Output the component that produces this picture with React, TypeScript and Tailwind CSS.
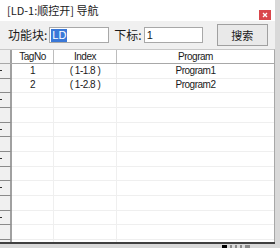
import React from "react";

const cjk = { fontFamily: '"Noto Sans CJK SC", "Liberation Sans", sans-serif' };
const sans = { fontFamily: '"Liberation Sans", Arial, sans-serif' };

const rows = [
  { tag: "1", idx: "( 1-1.8 )", prog: "Program1" },
  { tag: "2", idx: "( 1-2.8 )", prog: "Program2" },
];

export default function App() {
  const total = 13;
  const body = Array.from({ length: total }, (_, i) => rows[i] ?? null);
  return (
    <div className="relative w-[280px] h-[248px] overflow-hidden bg-[#d9d9d9]">
      <div className="flex flex-col w-[275px] h-[244px] bg-[#f0f0f0] border-b-2 border-[#404040]">
        {/* title bar */}
        <div className="relative h-[21px] shrink-0 bg-white flex items-center pl-[7px] text-[11px] text-[#1a1a1a]" style={cjk}>
          <span className="leading-none whitespace-nowrap">[LD-1:顺控开] 导航</span>
          <div className="absolute left-[259px] top-[10px] w-[12px] h-[10px] bg-[#d9464b] flex items-center justify-center">
            <svg width="6" height="6" viewBox="0 0 6 6">
              <path d="M1 1L5 5M5 1L1 5" stroke="#fff" strokeWidth="1.3" />
            </svg>
          </div>
        </div>
        {/* toolbar */}
        <div className="h-[28px] shrink-0 flex items-center text-[12px] text-[#1a1a1a] whitespace-nowrap" style={cjk}>
          <span className="ml-[8px] leading-none shrink-0">功能块:</span>
          <div className="ml-[2px] shrink-0 w-[60px] h-[16px] bg-white border border-[#a8a8a8] flex items-center pl-[1px]">
            <span className="bg-[#3a78d8] text-white text-[11px] leading-[13px] px-[1px]" style={sans}>LD</span>
          </div>
          <span className="ml-[5px] leading-none shrink-0">下标:</span>
          <div className="ml-[2px] shrink-0 w-[59px] h-[16px] bg-white border border-[#a8a8a8] flex items-center pl-[2px]">
            <span className="text-[11px] leading-none" style={sans}>1</span>
          </div>
          <div className="ml-[14px] shrink-0 w-[51px] h-[22px] bg-[#e9e9e9] border border-[#a0a0a0] flex items-center justify-center">
            <span className="text-[11px] leading-none">搜索</span>
          </div>
        </div>
        {/* table */}
        <div className="flex-1 bg-white border-t border-[#c8c8c8] border-r border-r-[#a8a8a8] overflow-hidden text-[10px] tracking-[-0.5px] text-[#1a1a1a]" style={sans}>
          <div className="flex h-[14px] border-b border-[#a8a8a8] bg-white">
            <div className="w-[12px] shrink-0 bg-[#f0f0f0] border-r-2 border-[#a0a0a0]" />
            <div className="w-[42px] shrink-0 border-r border-[#bdbdbd] flex items-center justify-center leading-none">TagNo</div>
            <div className="w-[63px] shrink-0 border-r border-[#bdbdbd] flex items-center justify-center leading-none">Index</div>
            <div className="flex-1 flex items-center justify-center leading-none">Program</div>
          </div>
          {body.map((r, i) => (
            <div key={i} className="flex h-[14.667px] border-b border-[#efefef]">
              <div className="relative w-[12px] shrink-0 bg-[#f0f0f0] border-r-2 border-[#a0a0a0] border-b border-b-[#8a8a8a] -mb-px">
                {i % 2 === 0 && <div className="absolute left-0 top-[6px] w-[2px] h-[1px] bg-[#303030]" />}
              </div>
              <div className="w-[42px] shrink-0 border-r border-[#efefef] flex items-center justify-center leading-none">{r?.tag}</div>
              <div className="w-[63px] shrink-0 border-r border-[#efefef] flex items-center justify-center leading-none">{r?.idx}</div>
              <div className="flex-1 flex items-center justify-center leading-none">{r?.prog}</div>
            </div>
          ))}
        </div>
      </div>
      <div className="absolute left-[222px] top-[245px] flex items-end gap-[3px]">
        <div className="w-[5px] h-[3px] bg-black" />
        <div className="w-[2px] h-[3px] bg-[#8a8a8a]" />
        <div className="w-[2px] h-[3px] bg-[#8a8a8a]" />
        <div className="w-[2px] h-[3px] bg-[#8a8a8a]" />
        <div className="w-[5px] h-[3px] bg-[#8a8a8a]" />
      </div>
    </div>
  );
}
